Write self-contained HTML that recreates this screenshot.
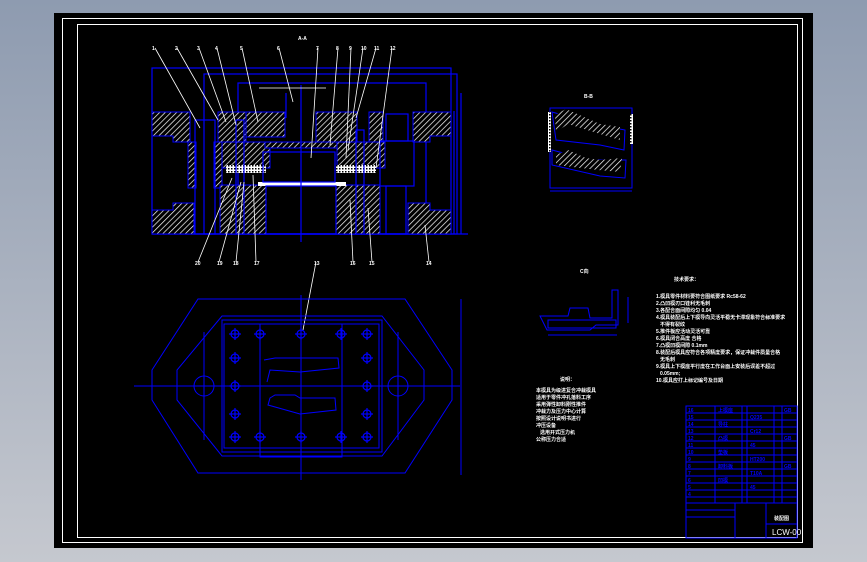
<!DOCTYPE html>
<html><head><meta charset="utf-8"><style>
html,body{margin:0;padding:0;width:867px;height:562px;overflow:hidden;background:linear-gradient(#8e9bb0,#c5c8cf);}
svg{position:absolute;left:0;top:0;}
.t{font-family:"Liberation Sans","Noto Sans CJK SC",sans-serif;fill:#fff;font-size:5px;font-weight:bold;}
.b{font-family:"Liberation Sans","Noto Sans CJK SC",sans-serif;fill:#0000ff;font-size:5px;font-weight:bold;}
</style></head><body>
<svg width="867" height="562" viewBox="0 0 867 562">
<defs>
<pattern id="h" width="4" height="4" patternUnits="userSpaceOnUse" patternTransform="rotate(45)">
<rect width="4" height="4" fill="#000"/><line x1="0" y1="0" x2="0" y2="4" stroke="#fff" stroke-width="1.4"/></pattern>
<pattern id="c" width="3" height="3" patternUnits="userSpaceOnUse">
<rect width="3" height="3" fill="#fff"/><rect width="1.5" height="1.5" fill="#000"/></pattern>
<g id="ho"><circle r="4"/><line x1="-6" x2="6"/><line y1="-6" y2="6"/></g>
</defs>
<rect x="54" y="13" width="759" height="535" fill="#000"/>
<rect x="62.5" y="18.5" width="740" height="524" fill="none" stroke="#fff"/>
<rect x="77.5" y="24.5" width="720" height="513" fill="none" stroke="#fff"/>

<!-- main section view -->
<g stroke="#0000ff" fill="none" stroke-width="1.2">
<rect x="152" y="68" width="299" height="166"/>
<rect x="204" y="74" width="253" height="160"/>
<rect x="238" y="83" width="188" height="151"/>
<line x1="152" y1="234" x2="468" y2="234"/>
<line x1="461" y1="93" x2="461" y2="234"/>
<line x1="454" y1="111" x2="454" y2="234"/>
</g>
<g fill="url(#h)" stroke="#0000ff" stroke-width="1">
<path d="M152 112H190V142H173V136H152Z"/>
<path d="M218 112H246V142H218Z"/>
<path d="M246 112H285V137H246Z"/>
<path d="M316 112H357V142H316Z"/>
<path d="M369 112H383V142H369Z"/>
<path d="M413 112H451V136H430V142H413Z"/>
<path d="M188 142H196V188H188Z"/>
<path d="M214 142H222V188H214Z"/>
<path d="M222 142H270V168H222Z"/>
<path d="M265 142H345V148H265Z"/>
<path d="M337 142H385V168H337Z"/>
<path d="M220 185H266V234H220Z"/>
<path d="M336 185H380V234H336Z"/>
<path d="M152 210H173V203H194V234H152Z"/>
<path d="M408 203H430V210H451V234H408Z"/>
</g>
<rect x="226" y="165" width="40" height="8" fill="url(#c)"/>
<rect x="336" y="165" width="40" height="8" fill="url(#c)"/>
<rect x="258" y="182" width="88" height="4" fill="#fff"/>
<g stroke="#0000ff" fill="none" stroke-width="1.2">
<rect x="195" y="120" width="20" height="114"/>
<rect x="263" y="152" width="72" height="30"/>
<rect x="266" y="186" width="70" height="48"/>
<rect x="380" y="141" width="34" height="45"/>
<rect x="386" y="114" width="22" height="27"/>
<rect x="386" y="186" width="20" height="48"/>
<rect x="236" y="120" width="8" height="114"/>
<rect x="356" y="130" width="8" height="104"/>
<line x1="301" y1="85" x2="301" y2="242"/>
<line x1="286" y1="93" x2="286" y2="118"/>
</g>
<g stroke="#fff" stroke-width="0.8" fill="none">
<path d="M155 48L200 128"/><path d="M177 48L218 120"/><path d="M199 48L226 122"/><path d="M217 48L236 125"/>
<path d="M242 48L258 122"/><path d="M279 48L293 102"/><path d="M318 48L311 158"/><path d="M338 48L330 145"/>
<path d="M351 48L346 158"/><path d="M363 48L348 150"/><path d="M376 48L356 118"/><path d="M392 48L376 168"/>
<path d="M198 262L232 178"/><path d="M219 262L241 182"/><path d="M236 262L244 182"/><path d="M256 262L253 175"/>
<path d="M353 262L350 200"/><path d="M372 262L368 208"/><path d="M429 262L425 225"/>
<path d="M259 88H326"/><path d="M316 262L303 330"/>
</g>
<g class="t"><text x="298" y="40">A-A</text>
<text x="152" y="50">1</text><text x="175" y="50">2</text><text x="197" y="50">3</text><text x="215" y="50">4</text><text x="240" y="50">5</text><text x="277" y="50">6</text><text x="316" y="50">7</text><text x="336" y="50">8</text><text x="349" y="50">9</text><text x="361" y="50">10</text><text x="374" y="50">11</text><text x="390" y="50">12</text>
<text x="195" y="265">20</text><text x="217" y="265">19</text><text x="233" y="265">18</text><text x="254" y="265">17</text><text x="350" y="265">16</text><text x="369" y="265">15</text><text x="426" y="265">14</text><text x="314" y="265">13</text></g>

<!-- plan view -->
<g stroke="#0000ff" fill="none" stroke-width="1">
<path d="M198 299H405L452 370V400L405 473H198L152 400V370Z"/>
<path d="M222 316H382L424 370V400L382 456H222L177 400V370Z"/>
<rect x="222" y="320" width="160" height="132"/>
<rect x="224" y="324" width="155" height="124"/>
<rect x="260" y="324" width="82" height="133"/>
<circle cx="204" cy="386" r="10"/><circle cx="398" cy="386" r="10"/>
<line x1="134" y1="386" x2="460" y2="386"/>
<line x1="301" y1="295" x2="301" y2="480"/>
<line x1="204" y1="332" x2="204" y2="440"/><line x1="398" y1="332" x2="398" y2="440"/>
<line x1="461" y1="299" x2="461" y2="475"/>
<path d="M264 360L275 358H338L339 368L300 372L270 370L267 382"/>
<path d="M270 398L275 395H295L300 398H335L336 410L300 414L268 405Z"/>
</g>
<g stroke="#0000ff" fill="none" stroke-width="1.2">
<use href="#ho" x="235" y="334"/><use href="#ho" x="260" y="334"/><use href="#ho" x="301" y="334"/><use href="#ho" x="341" y="334"/><use href="#ho" x="367" y="334"/>
<use href="#ho" x="235" y="358"/><use href="#ho" x="367" y="358"/>
<use href="#ho" x="235" y="386"/><use href="#ho" x="367" y="386"/>
<use href="#ho" x="235" y="414"/><use href="#ho" x="367" y="414"/>
<use href="#ho" x="235" y="437"/><use href="#ho" x="260" y="437"/><use href="#ho" x="301" y="437"/><use href="#ho" x="341" y="437"/><use href="#ho" x="367" y="437"/>
</g>

<!-- upper right view -->
<g stroke="#0000ff" fill="none" stroke-width="1">
<rect x="550" y="108" width="82" height="80"/>
<path d="M552 112L598 125L625 130L624 150L600 145L556 140Z"/>
<path d="M552 150L590 160L626 160L625 178L600 176L552 165Z"/>
<line x1="550" y1="191" x2="632" y2="191"/>
</g>
<path d="M555 115L566 109L600 124L620 127L620 140L600 134L568 124L556 132Z" fill="url(#h)"/>
<path d="M556 155L568 150L586 158L600 160L622 158L620 172L598 170L556 165Z" fill="url(#h)"/>
<rect x="548" y="112" width="3" height="40" fill="url(#c)"/><rect x="630" y="114" width="3" height="30" fill="url(#c)"/>
<text class="t" x="584" y="98">B-B</text>

<!-- small profile -->
<g stroke="#0000ff" fill="none" stroke-width="1">
<path d="M540 316H568L570 308H588L590 318H612V290H618V325H596L590 330H547Z"/>
<rect x="548" y="320" width="68" height="8"/>
<line x1="548" y1="335" x2="617" y2="335"/>
<line x1="628" y1="297" x2="628" y2="323"/>
</g>
<text class="t" x="580" y="273">C向</text>

<!-- notes -->
<g class="t">
<text x="674" y="281">技术要求：</text>
<text x="656" y="298">1.模具零件材料要符合图纸要求 Rc58-62</text>
<text x="656" y="305">2.凸凹模刃口锋利无毛刺</text>
<text x="656" y="312">3.各配合面间隙均匀 0.04</text>
<text x="656" y="319">4.模具装配后上下模导向灵活平稳无卡滞现象符合标准要求</text>
<text x="660" y="326">不得有裂纹</text>
<text x="656" y="333">5.推件板应活动灵活可靠</text>
<text x="656" y="340">6.模具闭合高度 合格</text>
<text x="656" y="347">7.凸模凹模间隙 0.1mm</text>
<text x="656" y="354">8.装配后模具应符合各项精度要求，保证冲裁件质量合格</text>
<text x="660" y="361">无毛刺</text>
<text x="656" y="368">9.模具上下模座平行度在工作台面上安装后误差不超过</text>
<text x="660" y="375">0.05mm;</text>
<text x="656" y="382">10.模具应打上标记编号及日期</text>
<text x="560" y="381">说明：</text>
<text x="536" y="392">本模具为级进复合冲裁模具</text>
<text x="536" y="399">适用于零件冲孔落料工序</text>
<text x="536" y="406">采用弹性卸料刚性推件</text>
<text x="536" y="413">冲裁力及压力中心计算</text>
<text x="536" y="420">按照设计说明书进行</text>
<text x="536" y="427">冲压设备</text>
<text x="540" y="434">选用开式压力机</text>
<text x="536" y="441">公称压力合适</text>
</g>

<!-- title block -->
<g stroke="#0000ff" fill="none" stroke-width="1">
<rect x="686" y="406" width="111" height="132"/>
<line x1="686" y1="413" x2="797" y2="413"/><line x1="686" y1="420" x2="797" y2="420"/><line x1="686" y1="427" x2="797" y2="427"/>
<line x1="686" y1="434" x2="797" y2="434"/><line x1="686" y1="441" x2="797" y2="441"/><line x1="686" y1="448" x2="797" y2="448"/>
<line x1="686" y1="455" x2="797" y2="455"/><line x1="686" y1="462" x2="797" y2="462"/><line x1="686" y1="469" x2="797" y2="469"/>
<line x1="686" y1="476" x2="797" y2="476"/><line x1="686" y1="483" x2="797" y2="483"/><line x1="686" y1="490" x2="797" y2="490"/>
<line x1="686" y1="497" x2="797" y2="497"/><line x1="686" y1="503" x2="797" y2="503"/>
<line x1="715" y1="406" x2="715" y2="503"/><line x1="742" y1="406" x2="742" y2="503"/><line x1="747" y1="406" x2="747" y2="503"/>
<line x1="782" y1="406" x2="782" y2="503"/><line x1="774" y1="406" x2="774" y2="503"/>
<line x1="735" y1="503" x2="735" y2="538"/><line x1="766" y1="503" x2="766" y2="538"/>
<line x1="766" y1="524" x2="797" y2="524"/><line x1="686" y1="510" x2="735" y2="510"/><line x1="686" y1="517" x2="735" y2="517"/>
</g>
<g class="b">
<text x="688" y="412">16</text><text x="688" y="419">15</text><text x="688" y="426">14</text><text x="688" y="433">13</text><text x="688" y="440">12</text><text x="688" y="447">11</text><text x="688" y="454">10</text><text x="688" y="461">9</text><text x="688" y="468">8</text><text x="688" y="475">7</text><text x="688" y="482">6</text><text x="688" y="489">5</text><text x="688" y="496">4</text>
<text x="718" y="412">上模座</text><text x="718" y="426">导柱</text><text x="718" y="440">凸模</text><text x="718" y="454">垫板</text><text x="718" y="468">卸料板</text><text x="718" y="482">凹模</text>
<text x="750" y="419">Q235</text><text x="750" y="433">Cr12</text><text x="750" y="447">45</text><text x="750" y="461">HT200</text><text x="750" y="475">T10A</text><text x="750" y="489">45</text>
<text x="784" y="412">GB</text><text x="784" y="440">GB</text><text x="784" y="468">GB</text>
</g>
<text class="t" x="774" y="520">装配图</text>
<text x="772" y="535" font-family="Liberation Sans,sans-serif" font-size="8" fill="#fff">LCW-00</text>
</svg>
</body></html>
